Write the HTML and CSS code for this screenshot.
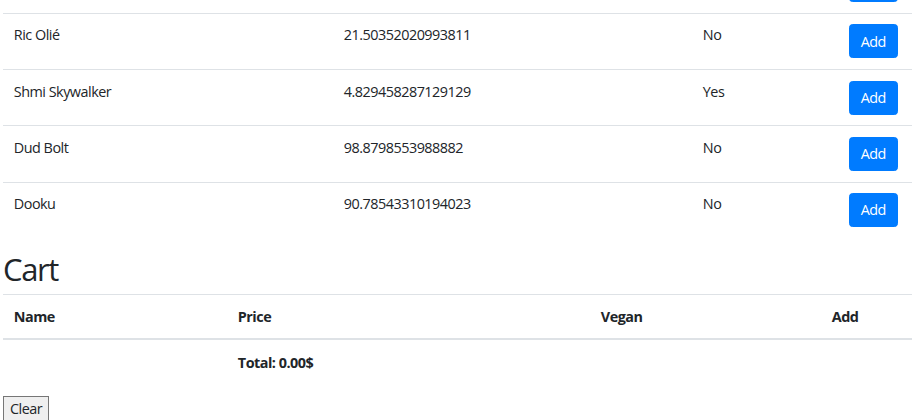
FILE: index.html
```html
<!DOCTYPE html>
<html lang="en">
<head>
<meta charset="utf-8">
<title>Shop</title>
<link rel="stylesheet" href="styles.css">
</head>
<body>
<div class="page">
  <table class="table table-products">
    <colgroup>
      <col class="p-name"><col class="p-price"><col class="p-vegan"><col class="p-add">
    </colgroup>
    <tbody>
      <tr class="row-partial">
        <td></td><td></td><td></td>
        <td><button class="btn-primary" aria-label="Add">&nbsp;</button></td>
      </tr>
      <tr>
        <td>Ric Olié</td><td>21.50352020993811</td><td>No</td>
        <td><button class="btn-primary">Add</button></td>
      </tr>
      <tr>
        <td>Shmi Skywalker</td><td>4.829458287129129</td><td>Yes</td>
        <td><button class="btn-primary">Add</button></td>
      </tr>
      <tr>
        <td>Dud Bolt</td><td>98.8798553988882</td><td>No</td>
        <td><button class="btn-primary">Add</button></td>
      </tr>
      <tr>
        <td>Dooku</td><td>90.78543310194023</td><td>No</td>
        <td><button class="btn-primary">Add</button></td>
      </tr>
    </tbody>
  </table>

  <h2 class="cart-title">Cart</h2>
  <table class="table table-cart">
    <colgroup>
      <col class="c-name"><col class="c-price"><col class="c-vegan"><col class="c-add">
    </colgroup>
    <thead>
      <tr><th>Name</th><th>Price</th><th>Vegan</th><th>Add</th></tr>
    </thead>
    <tbody>
      <tr><td></td><th>Total: 0.00$</th><td></td><td></td></tr>
    </tbody>
  </table>
  <button class="btn-clear">Clear</button>
</div>
</body>
</html>
```

FILE: styles.css
```css
html, body {
  margin: 0;
  padding: 0;
  background: #fff;
}
body {
  font-family: "Open Sans", "Noto Sans", "DejaVu Sans", sans-serif;
  font-size: 14.4px;
  line-height: 1.5;
  letter-spacing: -0.5px;
  color: #212529;
  overflow: hidden;
}
.page {
  padding-left: 3px;
}
.table {
  width: 100%;
  border-collapse: collapse;
  table-layout: fixed;
  margin-bottom: 14.6px;
}
.table td, .table th {
  padding: 10.55px 10.8px;
  vertical-align: top;
  border-top: 1px solid #dee2e6;
  text-align: left;
}
.table th {
  font-weight: 700;
}
.table thead th {
  vertical-align: bottom;
  border-bottom: 2px solid #dee2e6;
  padding-top: 11.2px;
  padding-bottom: 10.2px;
}
.table-cart {
  margin-bottom: 13.2px;
}
.table-cart tbody td, .table-cart tbody th {
  padding-top: 12.2px;
  padding-bottom: 8.8px;
}
.table-products {
  margin-top: -43.6px;
}
.p-name { width: 330px; }
.p-price { width: 359px; }
.p-vegan { width: 146px; }
.p-add { width: 74px; }
.c-name { width: 224px; }
.c-price { width: 363px; }
.c-vegan { width: 231px; }
.c-add { width: 91px; }
.btn-primary {
  font-family: inherit;
  font-size: 14.4px;
  line-height: 1.5;
  letter-spacing: -0.5px;
  color: #fff;
  background: #007bff;
  border: 1px solid #007bff;
  border-radius: 3.6px;
  padding: 5.3px 10.8px;
  margin: 0;
  display: inline-block;
  min-width: 49px;
}
.cart-title {
  font-size: 31px;
  font-weight: 400;
  line-height: 34px;
  letter-spacing: -1.4px;
  margin: 0 0 7.6px;
}
.btn-clear {
  font-family: inherit;
  font-size: 14.4px;
  line-height: 1.5;
  letter-spacing: -0.5px;
  color: #212529;
  background: #efefef;
  border: 1px solid #767676;
  border-radius: 0;
  padding: 1px 6px;
  margin: 0;
}
```
